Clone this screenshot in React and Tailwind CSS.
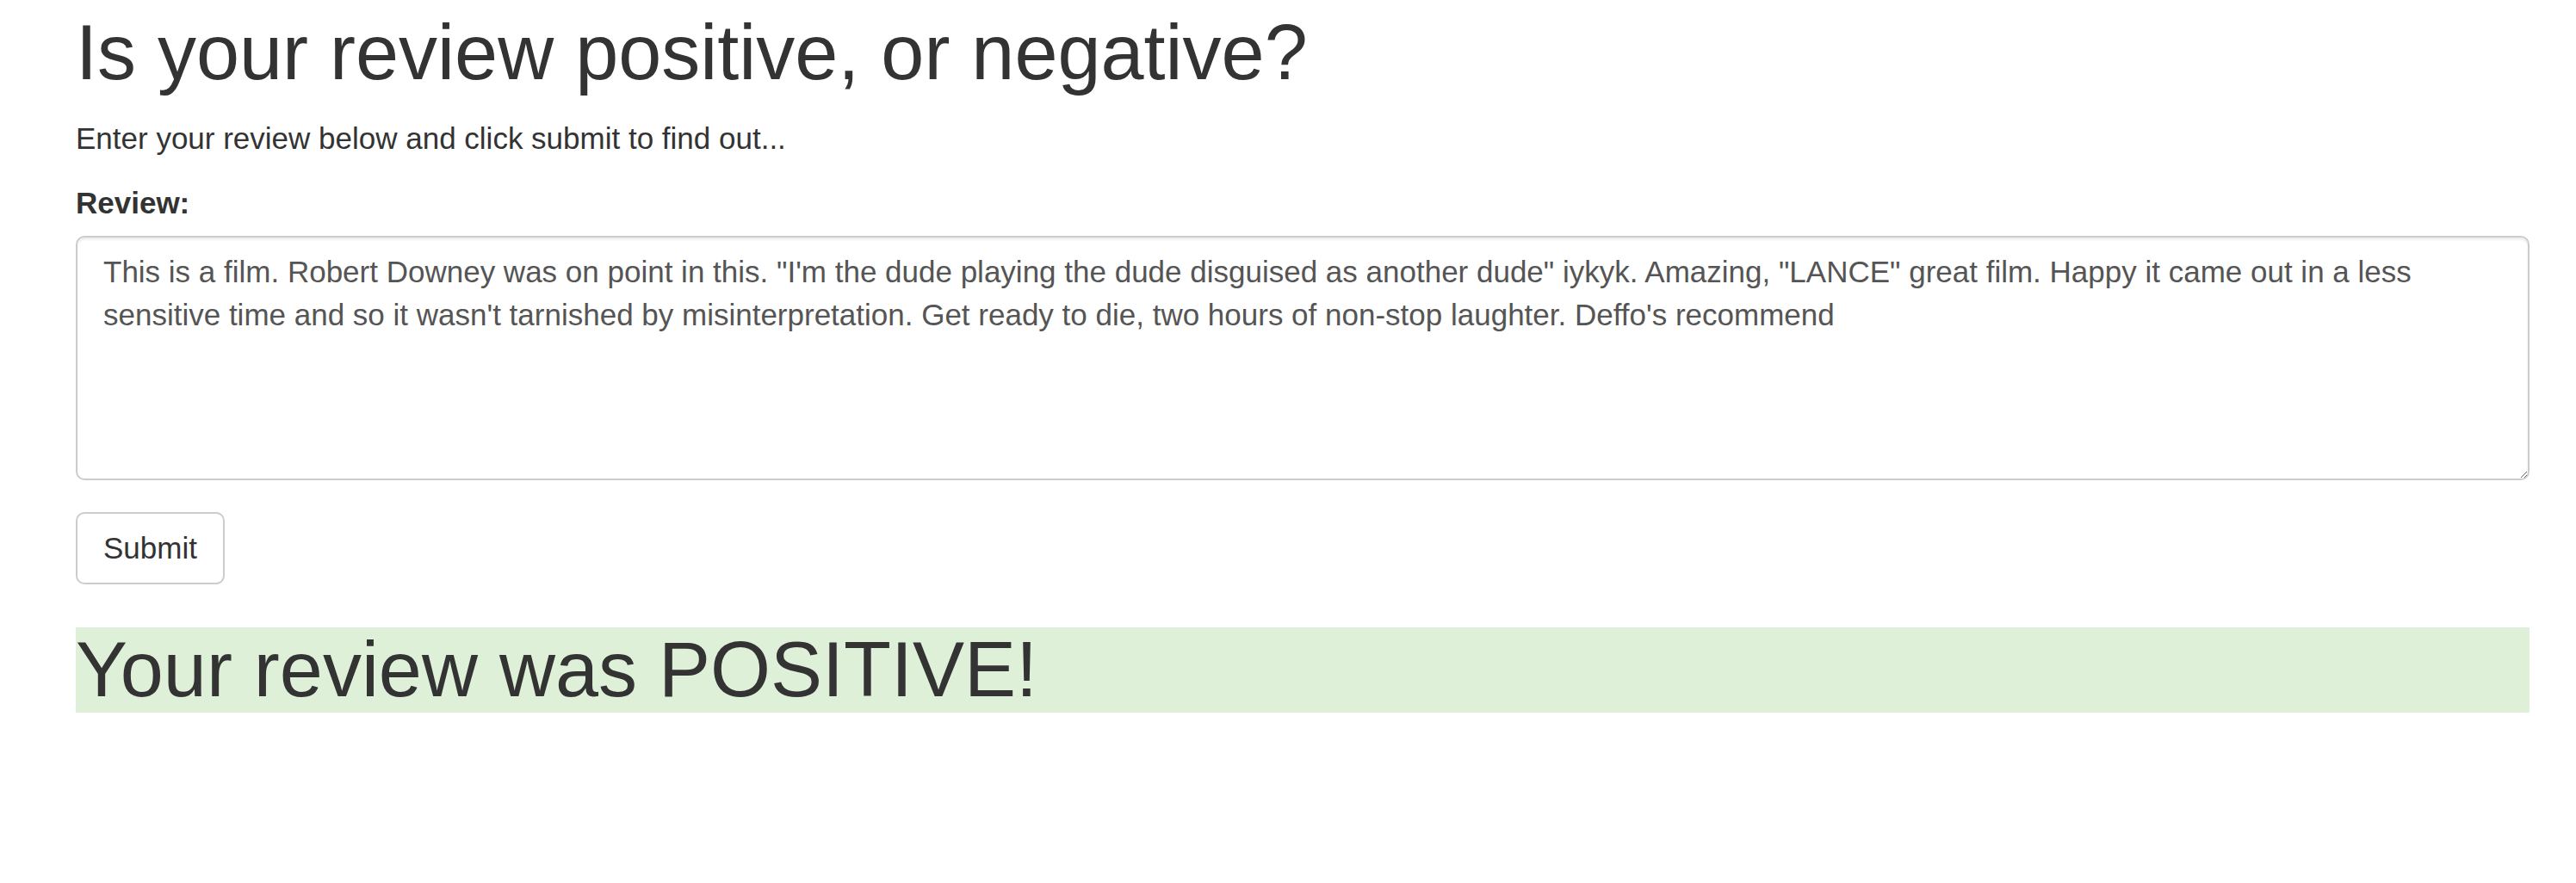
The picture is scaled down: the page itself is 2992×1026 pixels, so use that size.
import React from "react";

export default function App() {
  const review =
    "This is a film. Robert Downey was on point in this. \"I'm the dude playing the dude disguised as another dude\" iykyk. Amazing, \"LANCE\" great film. Happy it came out in a less sensitive time and so it wasn't tarnished by misinterpretation. Get ready to die, two hours of non-stop laughter. Deffo's recommend";
  return (
    <div className="min-h-screen bg-white pl-[88px] pr-[54px] pt-[12px] font-['Liberation_Sans',Arial,sans-serif] text-[35px] leading-[50px] text-[#333]">
      <h1 className="mb-[25px] text-[90px] font-normal leading-[99px] text-[#333]">
        Is your review positive, or negative?
      </h1>
      <p className="mb-[25px]">Enter your review below and click submit to find out...</p>
      <form onSubmit={(e) => e.preventDefault()}>
        <div className="mb-[37.5px]">
          <label htmlFor="review" className="mb-[12.5px] block font-bold">
            Review:
          </label>
          <textarea
            id="review"
            defaultValue={review}
            className="block h-[284px] w-full rounded-[10px] border-[2.5px] border-[#ccc] bg-white px-[30px] py-[15px] font-['Liberation_Sans',Arial,sans-serif] text-[35px] leading-[50px] text-[#555] shadow-[inset_0_2.5px_2.5px_rgba(0,0,0,0.075)] outline-none"
          />
        </div>
        <button
          type="submit"
          className="block rounded-[10px] border-[2.5px] border-[#ccc] bg-white px-[30px] py-[15px] font-['Liberation_Sans',Arial,sans-serif] text-[35px] leading-[50px] text-[#333]"
        >
          Submit
        </button>
      </form>
      <h1 className="mt-[50px] bg-[#dff0d8] text-[90px] font-normal leading-[99px] text-[#333]">
        Your review was POSITIVE!
      </h1>
    </div>
  );
}
